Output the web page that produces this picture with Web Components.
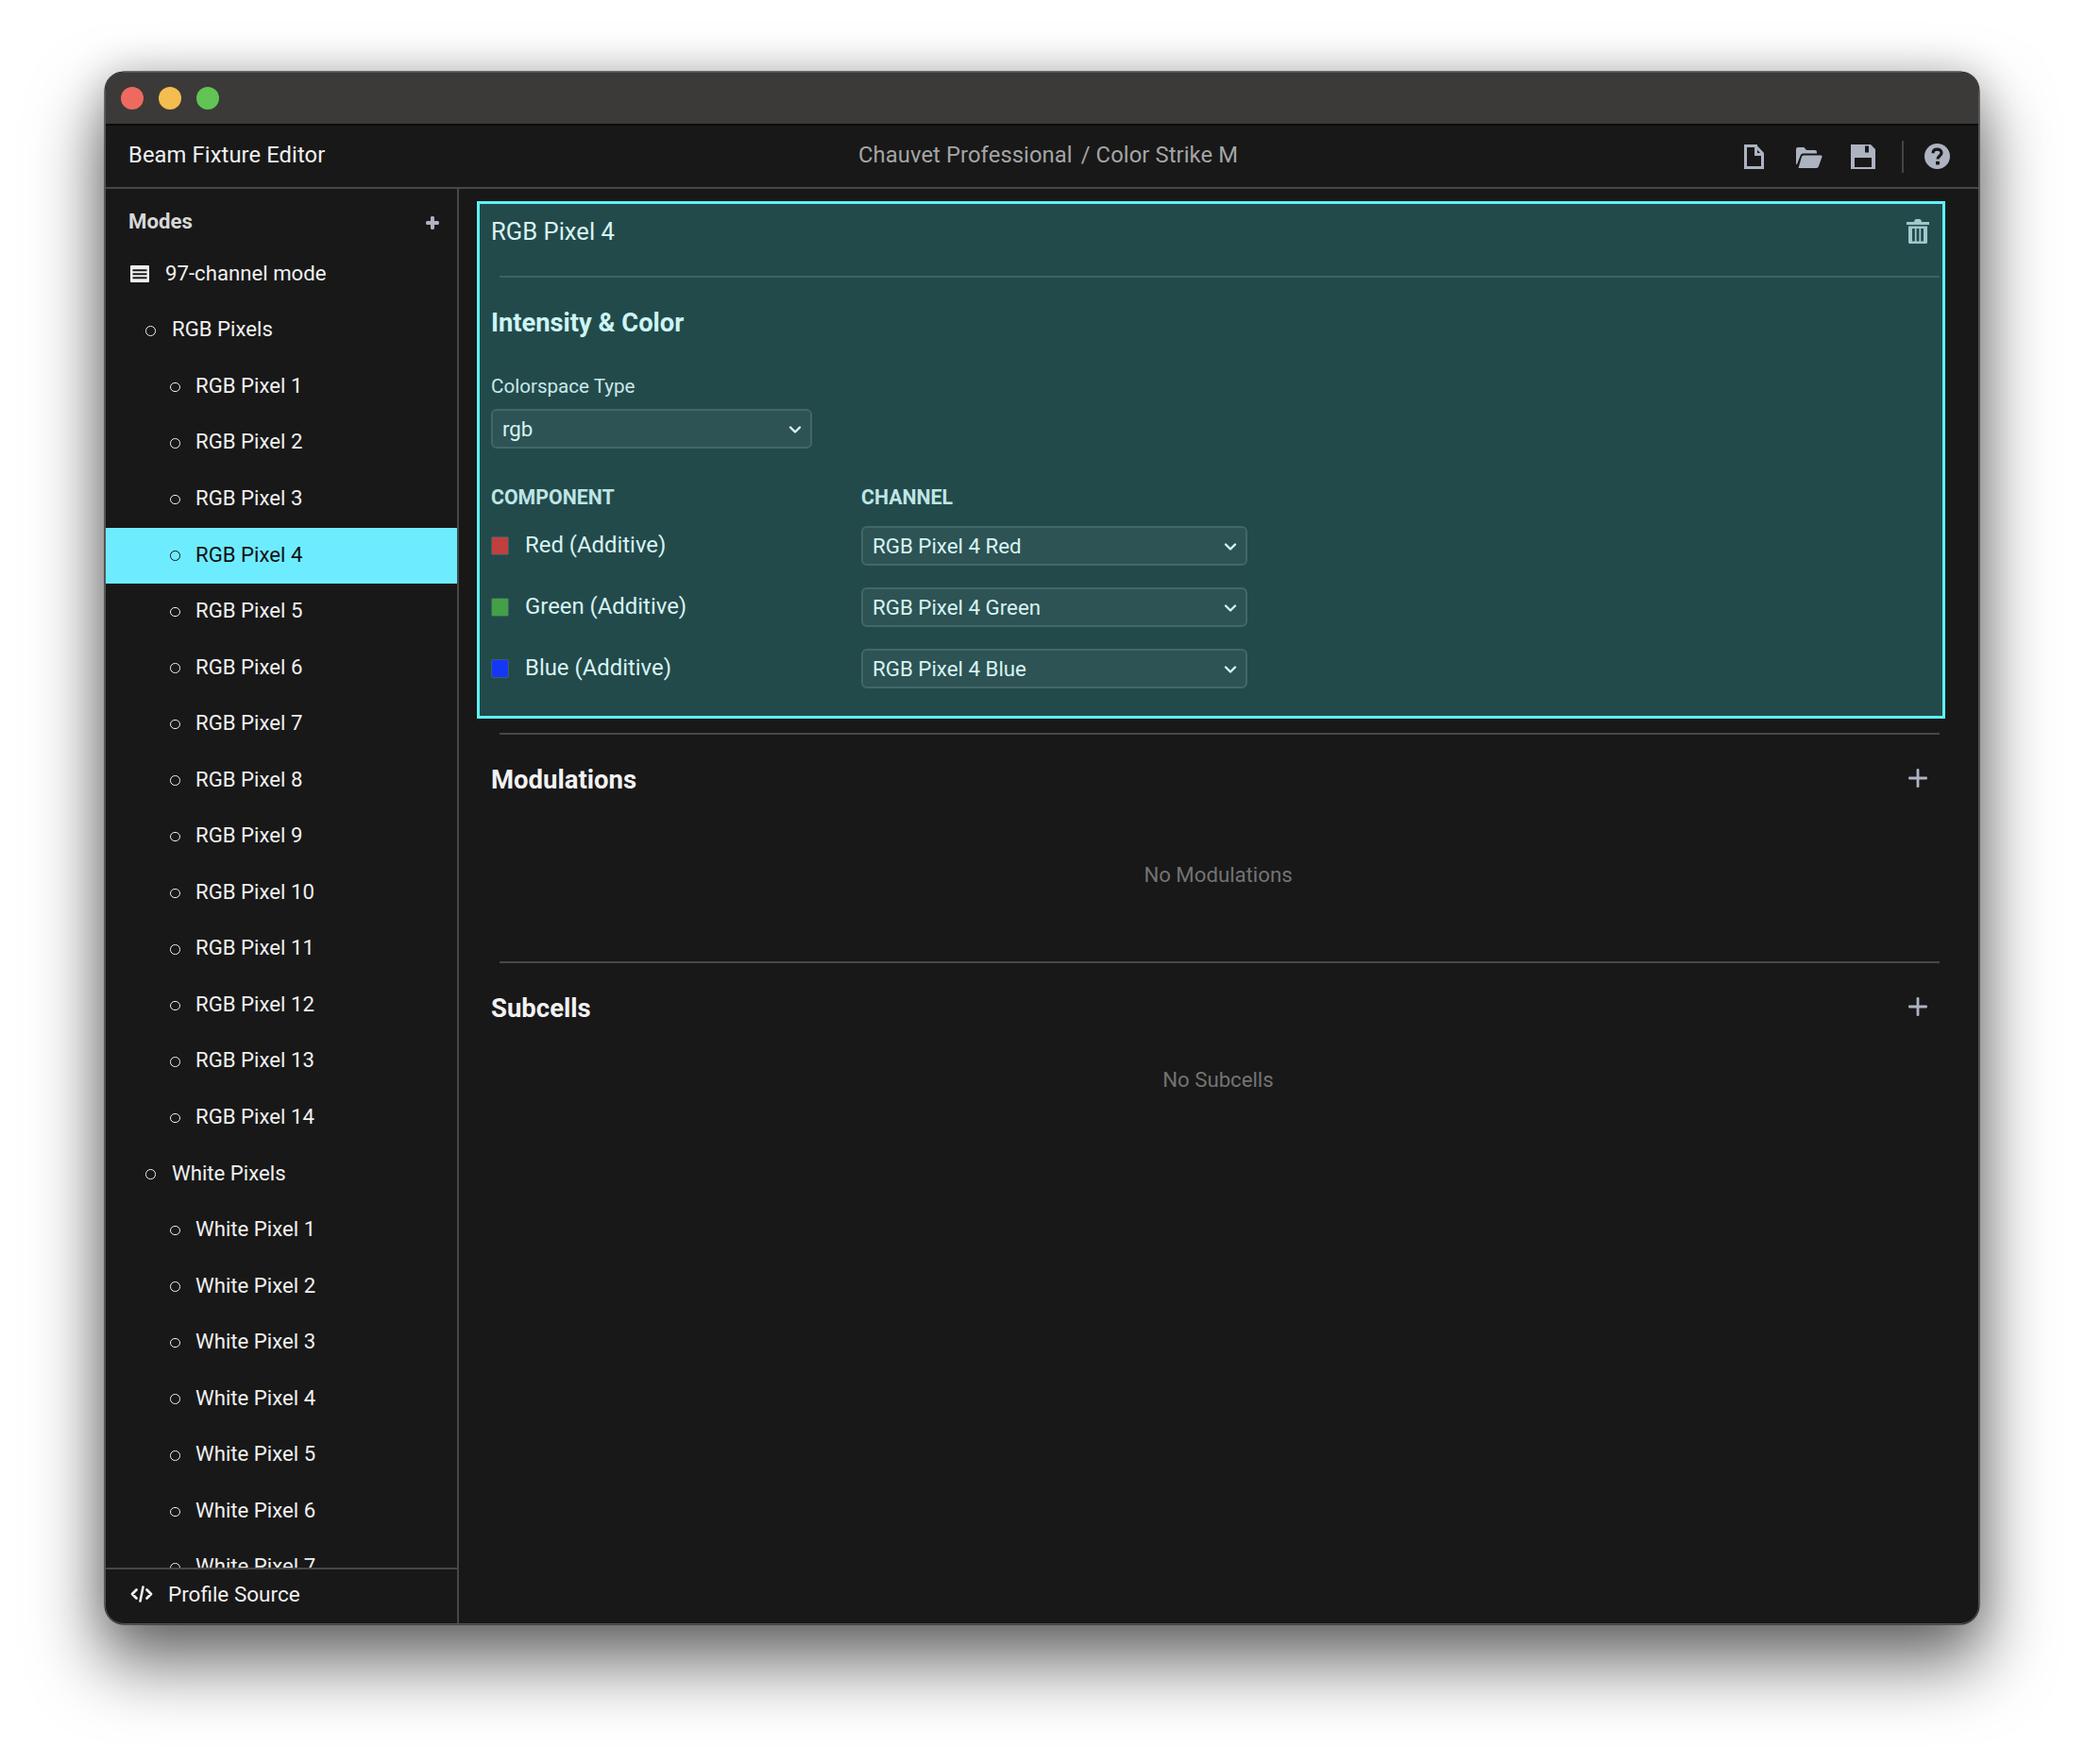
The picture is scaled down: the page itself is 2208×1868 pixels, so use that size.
<!DOCTYPE html>
<html><head><meta charset="utf-8">
<style>
html,body{margin:0;padding:0;background:#fff}
body{width:2208px;height:1868px;overflow:hidden;font-family:Roboto,"Liberation Sans",sans-serif}
</style></head><body>
<app-window>
  <traffic-bar slot="title"></traffic-bar>
  <app-header slot="header"></app-header>
  <mode-sidebar slot="side"></mode-sidebar>
  <main-pane slot="main"></main-pane>
</app-window>
<script>
const ic = {
 file:'<svg width="21" height="26" viewBox="0 0 21 26"><path fill="none" stroke="currentColor" stroke-width="3" d="M1.5 1.5H12L19.5 9.5V24.5H1.5Z"/><path fill="currentColor" d="M11 0H14V9H21V12H11Z"/></svg>',
 folder:'<svg width="28" height="26" viewBox="0 0 28 26"><path fill="currentColor" d="M0 5Q0 3 2 3H8.5L11 6H20Q22 6 22 8V9.5H7.5Q5.5 9.5 4.7 11.5L0.8 21.5Q0 20.5 0 19.5Z"/><path fill="currentColor" d="M8 11.5H26.5Q28 11.5 27.5 13L24 23Q23.5 25 21.5 25H2.5L6 13Q6.5 11.5 8 11.5Z"/></svg>',
 save:'<svg width="26" height="26" viewBox="0 0 26 26"><path fill="currentColor" fill-rule="evenodd" d="M0 0H21L26 5V26H0ZM15 1.5V8.5H19V1.5ZM4 14V24H22V14Z"/></svg>',
 help:'<svg width="27" height="27" viewBox="0 0 27 27"><circle cx="13.5" cy="13.5" r="13.5" fill="currentColor"/><path fill="none" stroke="#181818" stroke-width="3.2" d="M9 10.2C9 7.6 11 6.2 13.6 6.2C16.2 6.2 18 7.8 18 9.9C18 13 14 13 14 16.6"/><rect x="12" y="18.8" width="4" height="3.6" rx=".6" fill="#181818"/></svg>',
 trash:'<svg width="24" height="28" viewBox="0 0 24 28"><path fill="currentColor" fill-rule="evenodd" d="M0 4H8Q8.5 1 10 1H14Q15.5 1 16 4H24V7H0ZM2 8.5H22V25.5Q22 27 20.5 27H3.5Q2 27 2 25.5ZM6 11V24.5H8.8V11ZM10.6 11V24.5H13.4V11ZM15.2 11V24.5H18V11Z"/></svg>',
 plusS:'<svg width="14" height="14" viewBox="0 0 14 14"><path fill="currentColor" d="M5 1.2Q5 0 7 0T9 1.2V5H12.8Q14 5 14 7T12.8 9H9V12.8Q9 14 7 14T5 12.8V9H1.2Q0 9 0 7T1.2 5H5Z"/></svg>',
 plusL:'<svg width="20" height="20" viewBox="0 0 20 20"><path fill="currentColor" d="M8.6 1Q8.6 0 10 0T11.4 1V8.6H19Q20 8.6 20 10T19 11.4H11.4V19Q11.4 20 10 20T8.6 19V11.4H1Q0 11.4 0 10T1 8.6H8.6Z"/></svg>',
 list:'<svg width="20" height="18" viewBox="0 0 20 18"><path fill="currentColor" fill-rule="evenodd" d="M1 0H19Q20 0 20 1V17Q20 18 19 18H1Q0 18 0 17V1Q0 0 1 0ZM2.5 4.2V6.3H17.5V4.2ZM2.5 8.2V10.3H17.5V8.2ZM2.5 12.2V14.3H17.5V12.2Z"/></svg>',
 code:'<svg width="24" height="18" viewBox="0 0 24 18"><path fill="none" stroke="currentColor" stroke-width="2.8" stroke-linecap="round" stroke-linejoin="round" d="M6.5 4.5L2 9L6.5 13.5M17.5 4.5L22 9L17.5 13.5"/><path fill="none" stroke="currentColor" stroke-width="2.6" stroke-linecap="round" d="M13.5 1.5L10.5 16.5"/></svg>',
 chev:'<svg width="14" height="10" viewBox="0 0 14 10"><path fill="none" stroke="currentColor" stroke-width="2.4" stroke-linecap="round" stroke-linejoin="round" d="M2 2.5L7 7.5L12 2.5"/></svg>'
};
function def(name, html, setup){
  customElements.define(name, class extends HTMLElement{
    constructor(){super();this.attachShadow({mode:'open'}).innerHTML=html;}
    connectedCallback(){ if(setup) setup.call(this,this.shadowRoot); }
  });
}
def('app-window',`<style>
:host{display:grid;grid-template-columns:374px 1fr;grid-template-rows:56px 67px 1fr;position:absolute;left:112px;top:77px;width:1983px;height:1642px;
 border-radius:19px;background:#181818;overflow:hidden}
::slotted([slot=title]),::slotted([slot=header]){grid-column:1/3}
</style><slot name="title"></slot><slot name="header"></slot><slot name="side"></slot><slot name="main"></slot>`);
def('traffic-bar',`<style>
:host{display:flex;align-items:center;gap:16px;padding:0 0 0 16px;background:#3b3a38;border-bottom:2px solid #0c0c0c;box-sizing:border-box;height:56px}
i{width:24px;height:24px;border-radius:50%;display:block}
</style><i style="background:#ee6a5f"></i><i style="background:#f5bd4f"></i><i style="background:#61c454"></i>`);
def('app-header',`<style>
:host{display:grid;grid-template-columns:1fr auto 1fr;align-items:center;box-sizing:border-box;height:67px;padding:0 30px 3px 24px;background:#181818;border-bottom:2px solid #474747;font-size:23.75px;letter-spacing:.1px}
.t{color:#f0f0f0}.c{color:#a5a5a5;margin-left:19px}
.c span{margin-left:3px}
.r{display:flex;justify-content:flex-end;align-items:center;color:#aeb3c2;margin-top:3px}
.r svg{display:block}
.d{width:2px;height:34px;background:#444;margin:0 22px 0 28px}
</style><div class="t">Beam Fixture Editor</div><div class="c">Chauvet Professional <span>/ Color Strike M</span></div>
<div class="r">${ic.file}<span style="width:34px"></span>${ic.folder}<span style="width:30px"></span>${ic.save}<div class="d"></div>${ic.help}</div>`);
def('mode-sidebar',`<style>
:host{display:flex;flex-direction:column;min-height:0;border-right:2px solid #474747;box-sizing:border-box;color:#f0f0f0;font-size:22.2px;overflow:hidden}
.head{flex:none;display:flex;justify-content:space-between;align-items:center;height:61px;padding:7px 19px 0 24px;box-sizing:border-box;font-weight:700;color:#d8d8d8}
.plus{color:#aeb3c2;display:flex;margin-top:3px}
.tree{flex:1;min-height:0;overflow:hidden}
.foot{flex:none;height:59px;border-top:2px solid #474747;box-sizing:border-box;display:flex;align-items:center;padding:0 0 5px 26px;gap:16px;font-size:22.5px}
.foot svg{display:block}
</style><div class="head"><span>Modes</span><span class="plus">${ic.plusS}</span></div>
<div class="tree"><slot></slot></div>
<div class="foot">${ic.code}<span>Profile Source</span></div>`,function(r){
  if(this.childElementCount) return;
  const add=(t,l,s)=>{const e=document.createElement('tree-row');e.setAttribute('level',l);if(s)e.setAttribute('selected','');e.textContent=t;this.appendChild(e)};
  add('97-channel mode',0);add('RGB Pixels',1);
  for(let i=1;i<=14;i++)add('RGB Pixel '+i,2,i==4);
  add('White Pixels',1);
  for(let i=1;i<=7;i++)add('White Pixel '+i,2);
});
def('tree-row',`<style>
:host{display:flex;align-items:center;height:59.55px;padding-bottom:4px;box-sizing:border-box;color:#f0f0f0}
:host([selected]){background:#6decff;color:#111}
.b{width:10.5px;height:10.5px;border:1.8px solid currentColor;border-radius:50%;box-sizing:border-box;flex:none;margin-top:4px}
:host([level="0"]){padding-left:26px;gap:17px}
:host([level="1"]){padding-left:42px;gap:17.5px}
:host([level="2"]){padding-left:68px;gap:16.5px}
svg{display:block}
</style><span id="m"></span><span><slot></slot></span>`,function(r){
  const l=this.getAttribute('level');const m=r.getElementById('m');
  if(l==='0'){m.innerHTML=ic.list;m.style.marginTop='2px'}else{m.className='b'}
});
def('main-pane',`<style>
:host{display:block;min-width:0;overflow:hidden;padding:13px 35px 0 19px;box-sizing:border-box}
</style><slot></slot>`,function(){
  if(this.childElementCount) return;
  this.innerHTML=`<light-panel></light-panel>
  <empty-section title="Modulations" text="No Modulations" h="242" pt="40"></empty-section>
  <empty-section title="Subcells" text="No Subcells" pt="15"></empty-section>`;
});
def('light-select',`<style>
:host{display:flex;align-items:center;justify-content:space-between;box-sizing:border-box;height:42px;background:#2d5354;border:2px solid #436768;border-radius:6px;padding:0 9px 0 10px;color:#d8f3f3;font-size:22.3px}
svg{display:block;margin-top:2px}
</style><span><slot></slot></span>${ic.chev}`);
def('color-row',`<style>
:host{display:grid;grid-template-columns:392px 409px;align-items:center;height:65px;color:#d8f3f3;font-size:23.9px}
.l{display:flex;align-items:center;gap:17px}
.l span:last-child{margin-top:-2px}
.s{width:19px;height:20px;border-radius:2px;box-sizing:border-box;border:1px solid #3a5f60;background:var(--c)}
</style><div class="l"><span class="s"></span><span><slot></slot></span></div><light-select></light-select>`,function(r){
  r.querySelector('light-select').textContent=this.getAttribute('ch');
  this.style.setProperty('--c',this.getAttribute('c'));
});
def('light-panel',`<style>
:host{display:block;box-sizing:border-box;height:548px;background:#234a4b;border:3px solid #5df2f5;padding:0 3px 0 12px;color:#d8f3f3}
.top{display:flex;justify-content:space-between;align-items:flex-start;height:76px;box-sizing:border-box;padding:14px 11px 0 0;font-size:25.6px}
.top svg{display:block;margin-top:1px;color:#9fc8cd}
hr{border:0;height:2px;background:#3c6364;margin:0 0 0 9px}
h2{margin:0;font-size:27.3px;font-weight:700;height:98px;display:flex;align-items:center;padding-bottom:0;color:#cdf5f5;box-sizing:border-box;line-height:1}
.lab{font-size:20.6px;height:33px;display:flex;align-items:center;color:#c8e8e8}
.sel{width:340px;margin-top:8px}
.hd{display:grid;grid-template-columns:392px 1fr;font-size:21.3px;font-weight:700;color:#bfe5e5;margin-top:34px;height:35px;align-items:center}
.rows{margin-top:1px}
</style>
<div class="top"><span>RGB Pixel 4</span>${ic.trash}</div><hr>
<h2>Intensity &amp; Color</h2>
<div class="lab">Colorspace Type</div>
<light-select class="sel">rgb</light-select>
<div class="hd"><span>COMPONENT</span><span>CHANNEL</span></div>
<div class="rows">
<color-row c="#c0403f" ch="RGB Pixel 4 Red">Red (Additive)</color-row>
<color-row c="#43a047" ch="RGB Pixel 4 Green">Green (Additive)</color-row>
<color-row c="#1537f5" ch="RGB Pixel 4 Blue">Blue (Additive)</color-row>
</div>`);
def('empty-section',`<style>
:host{display:block;box-sizing:border-box;padding:15px 6px 0 15px;color:#fff}
hr{border:0;height:2px;background:#474747;margin:0 0 0 9px}
.h{display:flex;justify-content:space-between;align-items:center;height:95px;font-size:27.5px;font-weight:700;box-sizing:border-box;color:#f2f2f2}
.h svg{display:block;color:#aeb3c2;margin-right:13px;margin-top:-4px}
.e{text-align:center;color:#737373;font-size:22.2px;line-height:26px;margin-left:6px}
</style><hr><div class="h"><span id="t"></span>${ic.plusL}</div><div class="e" id="x"></div>`,function(r){
  r.getElementById('t').textContent=this.getAttribute('title');
  const x=r.getElementById('x');x.textContent=this.getAttribute('text');
  x.style.paddingTop=this.getAttribute('pt')+'px';
  if(this.getAttribute('h')) this.style.height=this.getAttribute('h')+'px';
});
document.querySelector('app-window').style.boxShadow='0 0 0 1px #555, 0 0 0 1.5px #0b0b0b, 0 38px 72px 6px rgba(0,0,0,.56), 0 0 40px 2px rgba(0,0,0,.18)';
</script>
</body></html>
